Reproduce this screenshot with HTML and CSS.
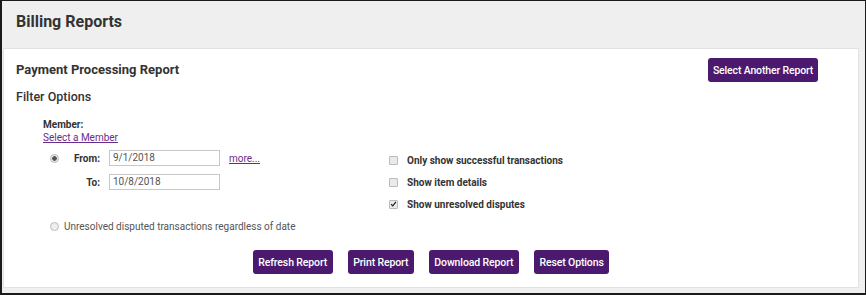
FILE: index.html
```html
<!DOCTYPE html>
<html>
<head>
<meta charset="utf-8">
<link rel="stylesheet" href="styles.css">
</head>
<body>
<div class="frame">
  <div class="page-header">Billing Reports</div>
  <div class="panel">
    <div class="title-row">
      <h2 class="report-title">Payment Processing Report</h2>
      <button class="btn btn-select">Select Another Report</button>
    </div>
    <div class="filter-title">Filter Options</div>
    <div class="filters">
      <div class="member">
        <div class="member-label">Member:</div>
        <a class="link" href="#">Select a Member</a>
      </div>
      <div class="options">
        <div class="dates">
          <div class="date-row">
            <span class="radio checked"></span>
            <span class="date-label">From:</span>
            <span class="input">9/1/2018</span>
            <a class="link more" href="#">more...</a>
          </div>
          <div class="date-row">
            <span class="radio hidden"></span>
            <span class="date-label">To:</span>
            <span class="input">10/8/2018</span>
          </div>
        </div>
        <div class="checks">
          <div class="check-row"><span class="checkbox"></span><span class="check-label">Only show successful transactions</span></div>
          <div class="check-row"><span class="checkbox"></span><span class="check-label">Show item details</span></div>
          <div class="check-row"><span class="checkbox checked"><svg width="8" height="8" viewBox="0 0 8 8"><path d="M1.3 4.3 L3.2 6.1 L6.7 1.7" fill="none" stroke="#222" stroke-width="1.4"/></svg></span><span class="check-label">Show unresolved disputes</span></div>
        </div>
      </div>
      <div class="unresolved">
        <span class="radio"></span>
        <span class="unresolved-label">Unresolved disputed transactions regardless of date</span>
      </div>
    </div>
    <div class="actions">
      <button class="btn">Refresh Report</button>
      <button class="btn">Print Report</button>
      <button class="btn">Download Report</button>
      <button class="btn">Reset Options</button>
    </div>
  </div>
</div>
</body>
</html>
```

FILE: styles.css
```css
* { box-sizing: border-box; }
html, body { margin: 0; padding: 0; background: #fff; }
body { font-family: Roboto, "Noto Sans", sans-serif; color: #333; }

.frame {
  width: 866px;
  height: 295px;
  border: 1px solid #1a1a1a;
  border-left-width: 2px;
  border-bottom-width: 2px;
  background: #efefef;
  padding: 0 6px 5px 1px;
  display: flex;
  flex-direction: column;
}

.page-header {
  height: 47px;
  padding-left: 13px;
  font-size: 16px;
  font-weight: 700;
  color: #333;
  line-height: 41px;
}

.panel {
  flex: 1;
  background: #fff;
  border: 1px solid #e2e2e2;
  padding: 9px 0 0 12px;
}

.title-row {
  display: flex;
  align-items: flex-start;
  justify-content: space-between;
  padding-right: 40px;
  height: 24px;
}

.report-title {
  margin: 4px 0 0;
  font-size: 13px;
  line-height: 16px;
  font-weight: 700;
  color: #333;
}

.btn {
  font-family: Roboto, "Noto Sans", sans-serif;
  background: #4b1a6e;
  color: #fff;
  border: none;
  border-radius: 3px;
  font-size: 10.5px;
  font-weight: 500;
  height: 24px;
  padding: 0 5.5px;
  letter-spacing: -0.12px;
  white-space: nowrap;
  cursor: pointer;
}

.btn-select { width: 110px; padding: 0; letter-spacing: -0.15px; }

.filter-title {
  margin-top: 7px;
  font-size: 12.5px;
  line-height: 16px;
  font-weight: 500;
  color: #333;
}

.filters {
  padding-left: 27px;
  margin-top: 13px;
  font-size: 10px;
}

.member-label { font-weight: 700; line-height: 13px; color: #333; }

.link {
  color: #6a2c8c;
  text-decoration: underline;
  font-size: 10px;
}

.member .link { display: block; line-height: 13px; }

.options {
  display: flex;
  margin-top: 6px;
}

.dates { width: 346px; }

.date-row {
  display: flex;
  align-items: center;
  height: 16px;
  margin-bottom: 8px;
}

.radio {
  width: 9px;
  height: 9px;
  border-radius: 50%;
  border: 1px solid #bbb;
  background: #eee;
  margin-left: 7px;
  flex: none;
}
.radio.checked {
  background: radial-gradient(circle, #555 0 2px, #e6e6e6 2.5px);
}
.radio.hidden { visibility: hidden; }

.date-label {
  width: 50px;
  text-align: right;
  padding-right: 9px;
  font-weight: 700;
  color: #333;
}

.input {
  width: 111px;
  height: 16px;
  border: 1px solid #c8c8c8;
  padding: 0 3px;
  line-height: 14px;
  color: #555;
  font-size: 10px;
}

.more { margin-left: 9px; }

.checks { padding-top: 4px; }

.check-row {
  display: flex;
  align-items: center;
  height: 12px;
  margin-bottom: 10px;
}
.check-row:last-child { margin-bottom: 0; }

.checkbox {
  width: 9px;
  height: 9px;
  border: 1px solid #bbb;
  background: #eaeaea;
  border-radius: 1px;
  margin-right: 9px;
  display: flex;
  align-items: center;
  justify-content: center;
}

.check-label { font-weight: 700; color: #333; }

.unresolved {
  display: flex;
  align-items: center;
  height: 12px;
  margin-top: 10px;
}
.unresolved .radio { margin-left: 7px; margin-right: 5px; }
.unresolved-label { color: #555; font-size: 10px; }

.actions {
  display: flex;
  justify-content: center;
  gap: 15px;
  margin-top: 18px;
  margin-left: -12px;
}
```
